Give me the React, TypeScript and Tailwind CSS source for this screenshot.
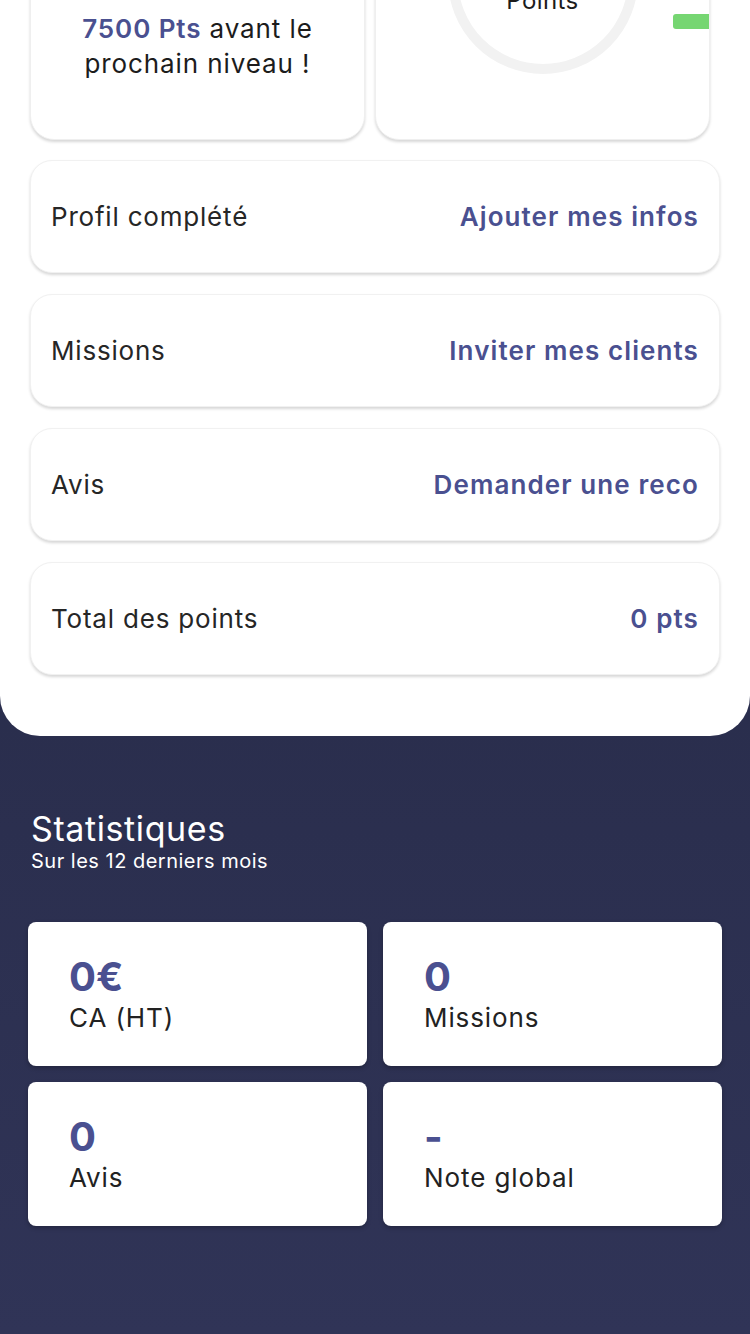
import React from 'react';

const font = { fontFamily: 'Inter, "Noto Sans", sans-serif' };

interface RowProps {
  label: string;
  action: string;
}

function PointRow({ label, action }: RowProps) {
  return (
    <div className="h-[113px] rounded-[22px] bg-white border border-[#f1f1f1] shadow-[0_2px_3px_rgba(0,0,0,0.16)] flex items-center justify-between pl-[20px] pr-[20px]">
      <span className="text-[26px] text-[#262626] tracking-[0.8px]">{label}</span>
      <span className="text-[26px] font-semibold text-[#4a5090] tracking-[1.1px]">{action}</span>
    </div>
  );
}

interface StatProps {
  value: string;
  label: string;
}

function StatCard({ value, label }: StatProps) {
  return (
    <div className="h-[144px] rounded-[8px] bg-white shadow-[0_2px_4px_rgba(0,0,0,0.25)] flex flex-col pl-[41px] pt-[32px]">
      <span className="text-[40px] leading-[46px] font-bold text-[#4a5090]">{value}</span>
      <span className="text-[26px] leading-[36px] text-[#222222] tracking-[0.9px]">{label}</span>
    </div>
  );
}

export default function App() {
  const rows: RowProps[] = [
    { label: 'Profil complété', action: 'Ajouter mes infos' },
    { label: 'Missions', action: 'Inviter mes clients' },
    { label: 'Avis', action: 'Demander une reco' },
    { label: 'Total des points', action: '0 pts' },
  ];

  const stats: StatProps[] = [
    { value: '0€', label: 'CA (HT)' },
    { value: '0', label: 'Missions' },
    { value: '0', label: 'Avis' },
    { value: '-', label: 'Note global' },
  ];

  return (
    <div style={font} className="w-[750px] min-h-[1334px] overflow-hidden bg-gradient-to-b from-[#232742] to-[#303457]">
      {/* white panel */}
      <div className="bg-white rounded-b-[40px] px-[30px] pb-[61px]">
        <div className="-mt-[140px] grid grid-cols-2 gap-[10px] mr-[10px]">
          {/* next level */}
          <div className="h-[280px] rounded-[24px] bg-white border border-[#efefef] shadow-[0_2px_3px_rgba(0,0,0,0.16)] flex flex-col justify-end items-center pb-[58px]">
            <p className="text-[26px] leading-[35px] text-[#1c1c1c] text-center tracking-[0.9px]">
              <span className="font-semibold text-[#4a5090]">7500 Pts</span> avant le
              <br />
              prochain niveau !
            </p>
          </div>
          {/* points ring */}
          <div className="relative h-[280px] rounded-[24px] bg-white border border-[#efefef] shadow-[0_2px_3px_rgba(0,0,0,0.16)] flex flex-col items-center pt-[23px]">
            <div className="relative w-[190px] h-[190px]">
              <svg width="190" height="190" viewBox="0 0 190 190">
                <circle cx="95" cy="95" r="90" fill="none" stroke="#f2f2f2" strokeWidth="10" />
              </svg>
              <div className="absolute inset-0 flex flex-col items-center justify-center">
                <div className="h-[44px]" />
                <span className="text-[24px] leading-[30px] text-[#1c1c1c] tracking-[0.4px]">Points</span>
              </div>
            </div>
            <div className="absolute right-0 top-[153px] w-[36px] h-[15px] rounded-l-[3px] bg-[#76d672]" />
          </div>
        </div>

        <div className="mt-[20px] flex flex-col gap-[21px]">
          {rows.map((r) => (
            <PointRow key={r.label} {...r} />
          ))}
        </div>
      </div>

      {/* stats */}
      <div className="px-[28px] pt-[73px] pb-[100px]">
        <h2 className="pl-[3px] text-[34px] leading-[40px] text-white tracking-[0.6px]">Statistiques</h2>
        <p className="pl-[3px] text-[20px] leading-[24px] text-white tracking-[0.5px]">Sur les 12 derniers mois</p>
        <div className="mt-[49px] grid grid-cols-2 gap-[16px]">
          {stats.map((s) => (
            <StatCard key={s.label} {...s} />
          ))}
        </div>
      </div>
    </div>
  );
}
